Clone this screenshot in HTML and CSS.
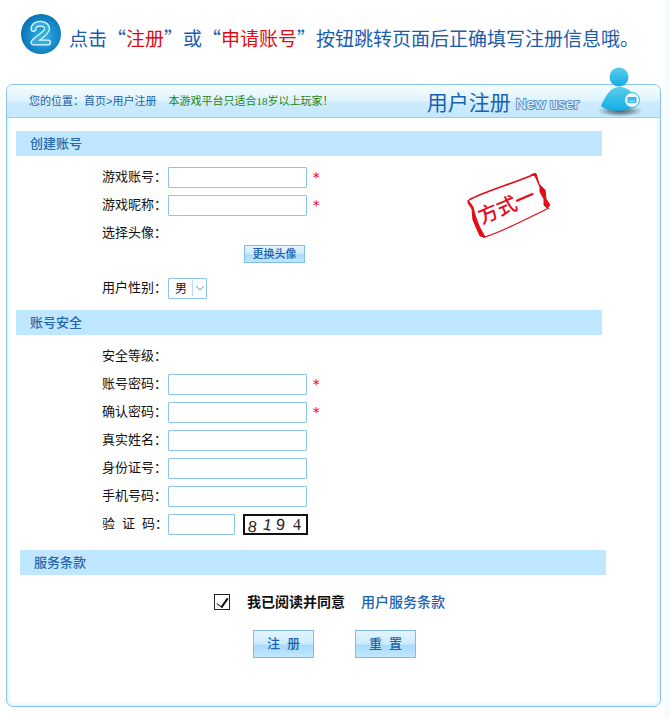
FILE: index.html
```html
<!DOCTYPE html>
<html lang="zh-CN">
<head>
<meta charset="utf-8">
<meta name="viewport" content="width=device-width, initial-scale=1">
<title>用户注册</title>
<link rel="stylesheet" href="styles.css">
</head>
<body>
<header class="step">
  <svg class="step-badge" viewBox="0 0 40 40" role="img" aria-label="2">
    <defs>
      <radialGradient id="disc" cx="55%" cy="55%" r="55%">
        <stop offset="0" stop-color="#35b5e6"/>
        <stop offset="1" stop-color="#0873b8"/>
      </radialGradient>
    </defs>
    <circle cx="20" cy="20" r="20" fill="url(#disc)"/>
    <path d="M12.500 15 C12.500 8 26 8 26 15 C26 19.500 17 23 12.500 28.500 H27" fill="none" stroke="#e4fbff" stroke-width="6" stroke-linecap="round" stroke-linejoin="round"/>
    <path d="M12.500 15 C12.500 8 26 8 26 15 C26 19.500 17 23 12.500 28.500 H27" fill="none" stroke="#35aede" stroke-width="3.600" stroke-linecap="round" stroke-linejoin="round"/>
  </svg>
  <h1 class="step-text">点击“<em>注册</em>”或“<em>申请账号</em>”按钮跳转页面后正确填写注册信息哦。</h1>
</header>

<main class="panel">
  <div class="panel-head">
    <nav class="crumbs">您的位置：<a href="#">首页</a>&gt;<a href="#">用户注册</a></nav>
    <p class="notice">本游戏平台只适合18岁以上玩家！</p>
    <h2 class="panel-title">用户注册 <span class="panel-sub">New user</span></h2>
    <svg class="person" viewBox="0 0 48 52" aria-hidden="true">
      <defs>
        <linearGradient id="skin" x1="0" y1="0" x2="0" y2="1">
          <stop offset="0" stop-color="#5accee"/>
          <stop offset="1" stop-color="#12aee2"/>
        </linearGradient>
        <radialGradient id="shade">
          <stop offset="0" stop-color="#4d6470"/>
          <stop offset="0.5" stop-color="#6d8795" stop-opacity="0.8"/>
          <stop offset="1" stop-color="#9dbccb" stop-opacity="0"/>
        </radialGradient>
      </defs>
      <ellipse cx="24" cy="45" rx="24" ry="6" fill="url(#shade)"/>
      <path d="M5 40 C9 31 14 21 23 21 C33 21 39 28 41 38 C35 46 12 47 5 40 Z" fill="url(#skin)"/>
      <circle cx="23" cy="11" r="9.500" fill="url(#skin)"/>
      <circle cx="36" cy="34" r="7.500" fill="#e9f9ff" stroke="#35b9e6"/>
      <path d="M31.500 31 H40.500 V37 H31.500 Z" fill="#43b8e4"/>
      <path d="M33 34.500 H39 V36 H33 Z" fill="#8bd8f4"/>
    </svg>
  </div>

  <form class="form">
    <section class="group">
      <h3 class="bar">创建账号</h3>
      <div class="rows">
        <div class="row">
          <label class="name" for="account">游戏账号：</label>
          <input class="field" id="account" type="text">
          <span class="must">*</span>
        </div>
        <div class="row">
          <label class="name" for="nick">游戏昵称：</label>
          <input class="field" id="nick" type="text">
          <span class="must">*</span>
        </div>
        <div class="row"><span class="name">选择头像：</span></div>
        <div class="avatar-row"><button class="btn btn-small" type="button">更换头像</button></div>
        <div class="row">
          <label class="name" for="sex">用户性别：</label>
          <span class="picker">
            <select class="select" id="sex"><option>男</option><option>女</option></select>
            <svg class="arrow" viewBox="0 0 14 18" aria-hidden="true">
              <path d="M0.500 1 V17" stroke="#b9dcf5"/>
              <path d="M4 7 L8 11 L12 7" fill="none" stroke="#6aaee0"/>
            </svg>
          </span>
        </div>
      </div>
      <svg class="stamp" viewBox="0 0 86 68">
        <path d="M3 28 C20 19 46 12 69 2" fill="none" stroke="#e30b18" stroke-width="1.600"/>
        <path d="M17 65.500 C34 61 58 48 83 36" fill="none" stroke="#e30b18" stroke-width="1.200"/>
        <path d="M2 28 L7 35 L9 43 L13 54 L19 65 L14 64 L10 55 L7 48 L6 37 L2 31 Z" fill="#e30b18" stroke="#e30b18" stroke-linejoin="round"/>
        <path d="M65 2.500 L70 1.500 L73 12 L79 18 L80 27 L84 33 L81 36 L78 33 L78 27 L74 20 L74 15 L69 4 Z" fill="#e30b18" stroke="#e30b18" stroke-linejoin="round"/>
        <text class="stamp-text" x="41" y="41" transform="rotate(-23 41 35)">方式一</text>
      </svg>
    </section>

    <section class="group">
      <h3 class="bar">账号安全</h3>
      <div class="rows">
        <div class="row"><span class="name">安全等级：</span></div>
        <div class="row">
          <label class="name" for="pass">账号密码：</label>
          <input class="field" id="pass" type="password">
          <span class="must">*</span>
        </div>
        <div class="row">
          <label class="name" for="pass2">确认密码：</label>
          <input class="field" id="pass2" type="password">
          <span class="must">*</span>
        </div>
        <div class="row">
          <label class="name" for="real">真实姓名：</label>
          <input class="field" id="real" type="text">
        </div>
        <div class="row">
          <label class="name" for="idno">身份证号：</label>
          <input class="field" id="idno" type="text">
        </div>
        <div class="row">
          <label class="name" for="phone">手机号码：</label>
          <input class="field" id="phone" type="tel">
        </div>
        <div class="row">
          <label class="name name-spread" for="code"><span>验</span><span>证</span><span>码：</span></label>
          <input class="field field-short" id="code" type="text">
          <svg class="captcha" viewBox="0 0 65 21">
            <rect x="1" y="1" width="63" height="19" fill="#fff" stroke="#111" stroke-width="2"/>
            <g class="captcha-text">
              <text x="5" y="18" transform="rotate(8 9 12)">8</text>
              <text x="20" y="16" transform="rotate(10 24 11)">1</text>
              <text x="33" y="16" transform="rotate(6 37 11)">9</text>
              <text class="captcha-serif" x="50" y="16">4</text>
            </g>
          </svg>
        </div>
      </div>
    </section>

    <section class="group group-terms">
      <h3 class="bar">服务条款</h3>
      <div class="agree">
        <input class="tick" id="agree" type="checkbox" checked>
        <label class="agree-text" for="agree">我已阅读并同意</label>
        <a class="terms" href="#">用户服务条款</a>
      </div>
      <div class="actions">
        <button class="btn btn-large" type="submit">注&nbsp; 册</button>
        <button class="btn btn-large" type="reset">重&nbsp; 置</button>
      </div>
    </section>
  </form>
</main>
</body>
</html>
```
FILE: styles.css
```css
* { box-sizing: border-box; }

body {
  margin: 0;
  padding: 14px 9px 10px 6px;
  background: linear-gradient(to left, #f3fcff 5px, #fff 6px);
  color: #111;
  font: 13px/20px "Liberation Sans", "Noto Sans CJK SC", sans-serif;
}

h1, h2, h3, p { margin: 0; font-weight: 400; }
a { color: inherit; text-decoration: none; }
input, select, button { font: inherit; margin: 0; }

/* step heading */
.step {
  display: flex;
  align-items: center;
  gap: 8px;
  height: 40px;
  margin: 0 0 30px 15px;
}
.step-badge { flex: none; width: 40px; height: 40px; }
.step-text {
  padding-top: 8px;
  color: #1a5cae;
  font: 400 19px/28px "Noto Sans CJK SC", sans-serif;
  white-space: nowrap;
}
.step-text em { color: #e00b12; font-style: normal; }

/* panel */
.panel {
  border: 1px solid #86c3ee;
  border-radius: 7px;
  box-shadow: inset 0 0 4px 1px #d3effd;
}
.panel-head {
  position: relative;
  display: flex;
  align-items: center;
  height: 33px;
  padding: 0 81px 0 22px;
  border-bottom: 1px solid #9fd0f2;
  border-radius: 6px 6px 0 0;
  background: linear-gradient(#f6fcff, #dff3fe 50%, #cdebfd 54%, #c4e8fd);
  font-size: 11px;
  white-space: nowrap;
}
.crumbs { color: #1d5fa6; }
.notice {
  margin-left: 12px;
  color: #238412;
  font-family: "Liberation Serif", "Noto Sans CJK SC", serif;
}
.panel-title {
  display: flex;
  align-items: center;
  gap: 5px;
  margin-left: auto;
  color: #1a62b0;
  font: 400 21px/28px "Noto Sans CJK SC", sans-serif;
}
.panel-sub {
  padding-top: 5px;
  color: #e3f4ff;
  font: 400 15px/20px "Liberation Sans", sans-serif;
  -webkit-text-stroke: 2px #5b94cb;
  paint-order: stroke fill;
}
.person {
  position: absolute;
  right: 16px;
  bottom: -1px;
  width: 48px;
  height: 52px;
}

/* form */
.form { padding: 13px 58px 48px 9px; }
.group { position: relative; }
.bar {
  height: 25px;
  padding-left: 14px;
  background: #bfe7ff;
  color: #2568ae;
  font-size: 13px;
  font-weight: 500;
  line-height: 25px;
}
.rows { padding: 7px 0 8px 86px; }
.row {
  display: flex;
  align-items: center;
  height: 28px;
}
.name { width: 66px; white-space: nowrap; }
.name-spread {
  display: flex;
  justify-content: space-between;
}
.field {
  width: 139px;
  height: 21px;
  padding: 0 4px;
  border: 1px solid #8cc4f0;
  border-radius: 1px;
  background: #fff;
}
.field-short { width: 67px; }
.must {
  margin-left: 5px;
  color: #f00;
  font: 14px/20px "DejaVu Sans Mono", monospace;
}
.avatar-row {
  display: flex;
  align-items: flex-start;
  height: 27px;
  padding-left: 142px;
}
.picker { position: relative; }
.select {
  display: block;
  width: 39px;
  height: 21px;
  padding: 0 0 0 6px;
  border: 1px solid #8cc4f0;
  border-radius: 1px;
  background: #fff;
  color: #111;
  font-size: 12px;
  appearance: none;
}
.arrow {
  position: absolute;
  top: 1px;
  right: 1px;
  width: 14px;
  height: 18px;
  pointer-events: none;
}
.captcha { width: 65px; height: 21px; margin-left: 8px; }
.captcha-text { fill: #222; font: 16px "Liberation Sans", sans-serif; }
.captcha-serif { font-family: "Liberation Serif", serif; }
.stamp {
  position: absolute;
  top: 41px;
  right: 50px;
  width: 86px;
  height: 68px;
}
.stamp-text {
  fill: #e30b18;
  font: 500 20px "Noto Sans CJK SC", sans-serif;
  text-anchor: middle;
}

/* buttons */
.btn {
  padding: 0;
  border: 1px solid #80bbeb;
  background: linear-gradient(#e3f4fe, #cdebfd 50%, #a9dafa 54%, #c0e7fe);
  color: #1c61ad;
  font-weight: 500;
  cursor: pointer;
}
.btn-small {
  width: 61px;
  height: 18px;
  margin-top: -2px;
  font-size: 11px;
  line-height: 16px;
}
.btn-large { width: 61px; height: 28px; }

/* terms */
.group-terms { margin: 4px -4px 0 4px; }
.agree {
  display: flex;
  align-items: center;
  height: 20px;
  margin: 17px 0 18px 194px;
  font-size: 14px;
  white-space: nowrap;
}
.tick {
  display: grid;
  place-items: start center;
  width: 16px;
  height: 16px;
  border: 1px solid #222;
  background: #fff;
  appearance: none;
}
.tick:checked::after {
  content: "";
  width: 5px;
  height: 10px;
  margin-top: 1px;
  border: solid #111;
  border-width: 0 2px 1px 0;
  transform: rotate(35deg);
}
.agree-text { margin-left: 17px; font-weight: 700; }
.terms { margin-left: 16px; color: #1a62b4; font-weight: 500; }
.actions {
  display: flex;
  gap: 41px;
  padding-left: 233px;
}
```
